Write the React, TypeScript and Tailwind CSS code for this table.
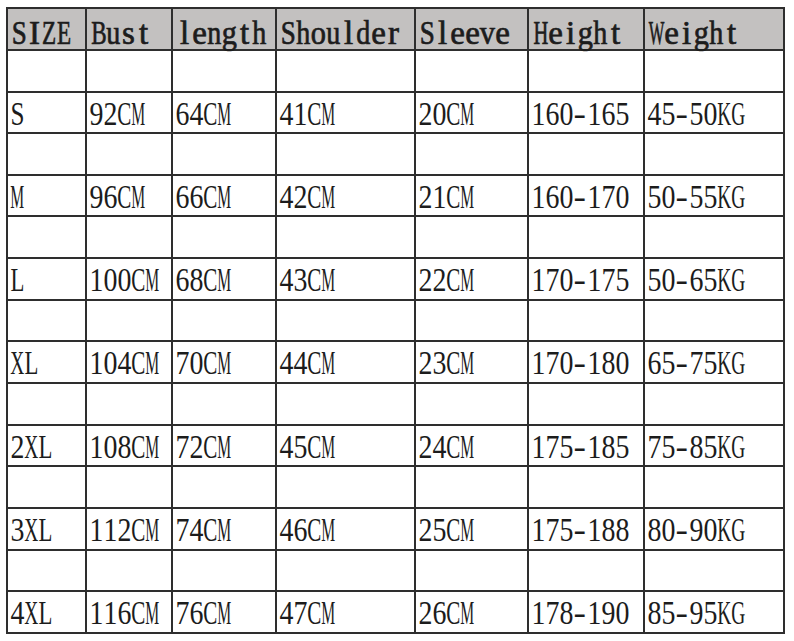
const headers = ['SIZE', 'Bust', 'length', 'Shoulder', 'Sleeve', 'Height', 'Weight'];

const sizes = [
  ['S', '92CM', '64CM', '41CM', '20CM', '160-165', '45-50KG'],
  ['M', '96CM', '66CM', '42CM', '21CM', '160-170', '50-55KG'],
  ['L', '100CM', '68CM', '43CM', '22CM', '170-175', '50-65KG'],
  ['XL', '104CM', '70CM', '44CM', '23CM', '170-180', '65-75KG'],
  ['2XL', '108CM', '72CM', '45CM', '24CM', '175-185', '75-85KG'],
  ['3XL', '112CM', '74CM', '46CM', '25CM', '175-188', '80-90KG'],
  ['4XL', '116CM', '76CM', '47CM', '26CM', '178-190', '85-95KG'],
];

// row heights between the 2px grid lines
const rowHeights = [40, 39, 40, 39, 40, 40, 39, 40, 40, 39, 40, 40, 39, 40];

// the chart uses a half-width (monospaced) serif; squeeze wide glyphs into their cell
const dataScale: Record<string, string> = {
  C: 'scale-x-[0.62]',
  M: 'scale-x-[0.46]',
  K: 'scale-x-[0.57]',
  G: 'scale-x-[0.57]',
  X: 'scale-x-[0.57]',
  S: 'scale-x-[0.74]',
  L: 'scale-x-[0.67]',
  '-': 'scale-x-[1.1]',
};

const headScale: Record<string, string> = {
  S: 'scale-x-[0.82]',
  Z: 'scale-x-[0.7]',
  E: 'scale-x-[0.7]',
  B: 'scale-x-[0.7]',
  H: 'scale-x-[0.62]',
  W: 'scale-x-[0.5]',
  u: 'scale-x-[0.85]',
  n: 'scale-x-[0.85]',
  h: 'scale-x-[0.85]',
  d: 'scale-x-[0.85]',
  g: 'scale-x-[0.92]',
  o: 'scale-x-[0.92]',
  v: 'scale-x-[0.92]',
};

const MonoText: React.FC<{ text: string; head?: boolean }> = ({ text, head }) => (
  <div
    className={`flex font-['Liberation_Serif',serif] leading-none ${
      head ? 'text-[33px] [-webkit-text-stroke:0.7px_#1c1c1c]' : 'text-[34px]'
    }`}
  >
    {text.split('').map((ch, i) => {
      const scale = head ? headScale[ch] : dataScale[ch] || (/[0-9]/.test(ch) ? 'scale-x-[0.82]' : '');
      return (
        <span key={i} className={`flex justify-center ${head ? 'w-[15px]' : 'w-[14px]'}`}>
          <span className={`inline-block ${scale || ''}`}>{ch}</span>
        </span>
      );
    })}
  </div>
);

const App: React.FC = () => {
  const rows: (string[] | null)[] = [];
  sizes.forEach(s => {
    rows.push(null);
    rows.push(s);
  });

  return (
    <div className="min-h-screen bg-white pt-[7px] pl-[6px]">
      <div className="grid w-[779px] grid-cols-[77px_84px_102px_137px_111px_114px_138px] gap-[2px] bg-[#2e2e2e] p-[2px] text-[#1c1c1c]">
        {headers.map(h => (
          <div key={h} className="h-[40px] overflow-visible bg-[#c3c1c0] pl-[4px] pt-[8px]">
            <MonoText text={h} head />
          </div>
        ))}
        {rows.map((r, i) =>
          headers.map((h, j) => (
            <div
              key={`${i}-${h}`}
              className={`overflow-visible bg-white pl-[2px] pt-[4px] ${rowHeights[i] === 40 ? 'h-[40px]' : 'h-[39px]'}`}
            >
              {r && <MonoText text={r[j]} />}
            </div>
          )),
        )}
      </div>
    </div>
  );
};

export default App;
